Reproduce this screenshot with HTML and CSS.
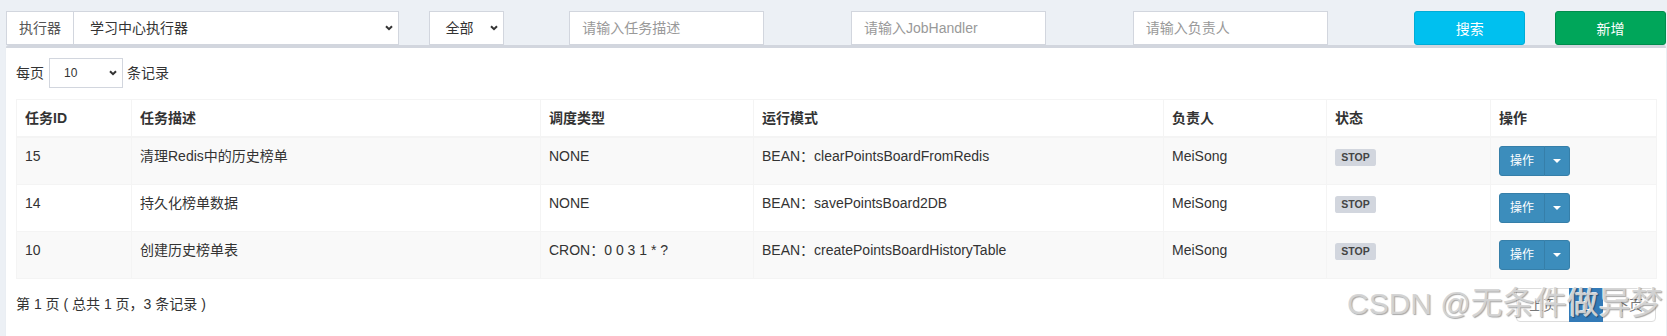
FILE: index.html
```html
<!DOCTYPE html>
<html lang="zh-CN">
<head>
<meta charset="utf-8">
<title>任务管理</title>
<link rel="stylesheet" href="styles.css">
</head>
<body>
<div class="content">
  <div class="toolbar">
    <div class="col span-3">
      <div class="input-group">
        <span class="addon">执行器</span>
        <div class="select grow"><span>学习中心执行器</span><svg class="chev" width="8" height="6" viewBox="0 0 8 6"><path d="M1 1.2 L4 4.2 L7 1.2" fill="none" stroke="#333" stroke-width="2"/></svg></div>
      </div>
    </div>
    <div class="col span-1">
      <div class="select status"><span>全部</span><svg class="chev" width="8" height="6" viewBox="0 0 8 6"><path d="M1 1.2 L4 4.2 L7 1.2" fill="none" stroke="#333" stroke-width="2"/></svg></div>
    </div>
    <div class="col span-2"><input class="text-input" type="text" placeholder="请输入任务描述"></div>
    <div class="col span-2"><input class="text-input" type="text" placeholder="请输入JobHandler"></div>
    <div class="col span-2"><input class="text-input" type="text" placeholder="请输入负责人"></div>
    <div class="col span-1"><button class="btn btn-info">搜索</button></div>
    <div class="col span-1"><button class="btn btn-success">新增</button></div>
  </div>

  <div class="box">
    <div class="box-body">
      <div class="length">
        <span>每页</span>
        <div class="select sm"><span>10</span><svg class="chev" width="8" height="6" viewBox="0 0 8 6"><path d="M1 1.2 L4 4.2 L7 1.2" fill="none" stroke="#333" stroke-width="2"/></svg></div>
        <span>条记录</span>
      </div>

      <table class="grid">
        <colgroup>
          <col class="c-id"><col class="c-desc"><col class="c-type"><col class="c-mode"><col class="c-author"><col class="c-status"><col class="c-op">
        </colgroup>
        <thead>
          <tr><th>任务ID</th><th>任务描述</th><th>调度类型</th><th>运行模式</th><th>负责人</th><th>状态</th><th>操作</th></tr>
        </thead>
        <tbody>
          <tr>
            <td>15</td><td>清理Redis中的历史榜单</td><td>NONE</td><td>BEAN：clearPointsBoardFromRedis</td><td>MeiSong</td>
            <td><span class="label">STOP</span></td>
            <td><div class="btn-group"><button class="bp main">操作</button><button class="bp toggle"><span class="caret"></span></button></div></td>
          </tr>
          <tr>
            <td>14</td><td>持久化榜单数据</td><td>NONE</td><td>BEAN：savePointsBoard2DB</td><td>MeiSong</td>
            <td><span class="label">STOP</span></td>
            <td><div class="btn-group"><button class="bp main">操作</button><button class="bp toggle"><span class="caret"></span></button></div></td>
          </tr>
          <tr>
            <td>10</td><td>创建历史榜单表</td><td>CRON：0 0 3 1 * ?</td><td>BEAN：createPointsBoardHistoryTable</td><td>MeiSong</td>
            <td><span class="label">STOP</span></td>
            <td><div class="btn-group"><button class="bp main">操作</button><button class="bp toggle"><span class="caret"></span></button></div></td>
          </tr>
        </tbody>
      </table>

      <div class="footer-row">
        <div class="info">第 1 页 ( 总共 1 页，3 条记录 )</div>
        <ul class="pagination">
          <li class="disabled"><a>上页</a></li>
          <li class="active"><a>1</a></li>
          <li class="disabled"><a>下页</a></li>
        </ul>
      </div>
    </div>
  </div>
</div>
<div class="watermark"><span class="wm-latin">CSDN @</span><span class="wm-cjk">无条件做异梦</span></div>
</body>
</html>
```
FILE: styles.css
```css
* { box-sizing: border-box; }
html, body { margin: 0; padding: 0; }
body {
  width: 1667px;
  height: 336px;
  overflow: hidden;
  position: relative;
  background: #ecf0f5;
  font-family: "Liberation Sans", Arial, "Noto Sans CJK SC", sans-serif;
  font-size: 14px;
  line-height: 20px;
  color: #333;
}
.content { padding: 11px 1px 0 6px; }

.toolbar {
  display: grid;
  grid-template-columns: repeat(12, 1fr);
  margin: 0 -15px;
}
.col { padding: 0 15px; }
.span-1 { grid-column: span 1; }
.span-2 { grid-column: span 2; }
.span-3 { grid-column: span 3; }

.input-group { display: flex; height: 34px; }
.addon {
  padding: 6px 12px;
  border: 1px solid #d2d6de;
  border-right: 0;
  background: #fff;
  color: #555;
  white-space: nowrap;
}
.select {
  display: flex;
  align-items: center;
  justify-content: space-between;
  height: 34px;
  border: 1px solid #d2d6de;
  background: #fff;
  padding: 0 5px 0 16px;
  color: #333;
}
.select.grow { flex: 1; }
.select.status { width: 75px; }
.chev { display: block; }

.text-input {
  display: block;
  width: 195px;
  height: 34px;
  padding: 6px 12px;
  border: 1px solid #d2d6de;
  background: #fff;
  font-family: inherit;
  font-size: 14px;
  color: #555;
  outline: none;
  border-radius: 0;
}
.text-input::placeholder { color: #999; }

.btn {
  display: block;
  width: 100%;
  height: 34px;
  border: 1px solid transparent;
  border-radius: 3px;
  color: #fff;
  font-family: inherit;
  font-size: 14px;
  padding: 0;
}
.btn-info { background: #00c0ef; border-color: #00acd6; }
.btn-success { background: #00a65a; border-color: #008d4c; }

.box {
  background: #fff;
  border-top: 3px solid #d2d6de;
  border-radius: 3px;
  box-shadow: 0 1px 1px rgba(0,0,0,0.1);
  min-height: 400px;
}
.box-body { padding: 10px; }

.length {
  display: flex;
  align-items: center;
  height: 30px;
}
.select.sm {
  width: 74px;
  height: 30px;
  font-size: 12px;
  padding-left: 14px;
  margin: 0 4px 0 5px;
}

.grid {
  width: 100%;
  table-layout: fixed;
  border-collapse: collapse;
  border: 1px solid #f4f4f4;
  margin-top: 11px;
  margin-bottom: 7px;
}
.c-id { width: 115px; }
.c-desc { width: 409px; }
.c-type { width: 213px; }
.c-mode { width: 410px; }
.c-author { width: 163px; }
.c-status { width: 164px; }
.c-op { width: 166px; }
.grid th, .grid td {
  padding: 8px;
  border: 1px solid #f4f4f4;
  text-align: left;
  vertical-align: top;
  line-height: 20px;
}
.grid th { font-weight: bold; border-bottom: 2px solid #f4f4f4; }
.grid tbody tr:nth-child(odd) { background: #f9f9f9; }

.label {
  display: inline;
  padding: .2em .6em .3em;
  font-size: 10.5px;
  font-weight: bold;
  line-height: 1;
  color: #444;
  background: #d2d6de;
  border-radius: .25em;
}

.btn-group { display: inline-flex; vertical-align: top; }
.bp {
  height: 30px;
  background: #3c8dbc;
  border: 1px solid #367fa9;
  color: #fff;
  font-family: inherit;
  font-size: 12px;
  line-height: 18px;
  padding: 5px 10px;
}
.bp.main { border-radius: 3px 0 0 3px; }
.bp.toggle {
  padding: 5px 8px;
  margin-left: -1px;
  border-radius: 0 3px 3px 0;
  display: flex;
  align-items: center;
}
.caret {
  display: block;
  width: 0;
  height: 0;
  border-top: 4px solid #fff;
  border-left: 4px solid transparent;
  border-right: 4px solid transparent;
}

.footer-row {
  display: flex;
  justify-content: space-between;
  align-items: flex-start;
}
.info { padding-top: 8px; }
.pagination {
  display: flex;
  list-style: none;
  margin: 2px 0;
  padding: 0;
}
.pagination a {
  display: block;
  padding: 6px 12px;
  line-height: 20px;
  border: 1px solid #ddd;
  margin-left: -1px;
  background: #fff;
  color: #777;
}
.pagination li:first-child a { margin-left: 0; border-radius: 4px 0 0 4px; }
.pagination li:last-child a { border-radius: 0 4px 4px 0; }
.pagination .active a { background: #337ab7; border-color: #337ab7; color: #fff; position: relative; z-index: 1; }

.watermark {
  position: absolute;
  left: 1347px;
  top: 285px;
  font-family: "Liberation Sans", Arial, "Noto Sans CJK SC", sans-serif;
  line-height: 36px;
  white-space: nowrap;
  color: rgba(212,212,212,0.95);
  text-shadow: 1px 1px 1px rgba(0,0,0,0.35), -1px -1px 0 rgba(255,255,255,0.8);
  pointer-events: none;
  z-index: 2;
}
.wm-latin { font-size: 30px; }
.wm-cjk { font-size: 32px; }
```
